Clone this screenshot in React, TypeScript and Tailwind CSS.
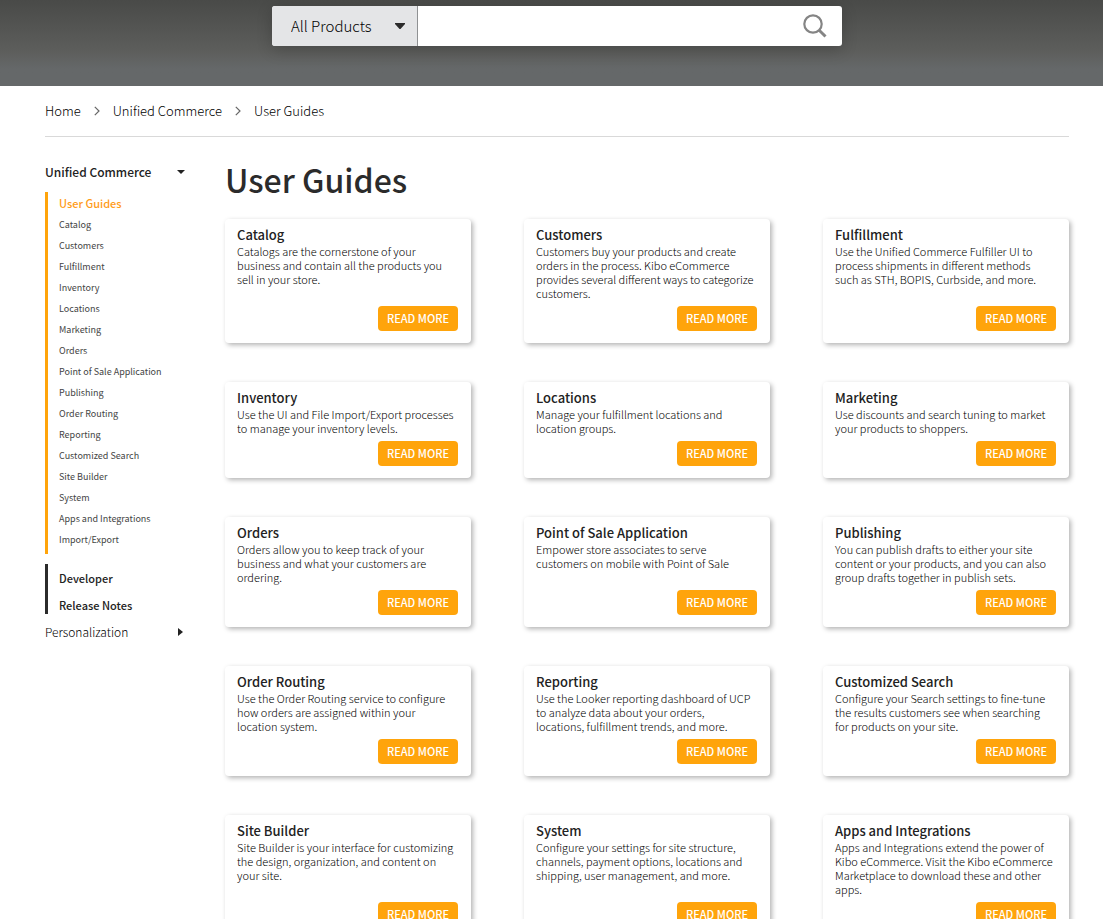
import { useState } from 'react';

const guides = [
  { title: 'Catalog', text: 'Catalogs are the cornerstone of your business and contain all the products you sell in your store.' },
  { title: 'Customers', text: 'Customers buy your products and create orders in the process. Kibo eCommerce provides several different ways to categorize customers.' },
  { title: 'Fulfillment', text: 'Use the Unified Commerce Fulfiller UI to process shipments in different methods such as STH, BOPIS, Curbside, and more.' },
  { title: 'Inventory', text: 'Use the UI and File Import/Export processes to manage your inventory levels.' },
  { title: 'Locations', text: 'Manage your fulfillment locations and location groups.' },
  { title: 'Marketing', text: 'Use discounts and search tuning to market your products to shoppers.' },
  { title: 'Orders', text: 'Orders allow you to keep track of your business and what your customers are ordering.' },
  { title: 'Point of Sale Application', text: 'Empower store associates to serve customers on mobile with Point of Sale' },
  { title: 'Publishing', text: 'You can publish drafts to either your site content or your products, and you can also group drafts together in publish sets.' },
  { title: 'Order Routing', text: 'Use the Order Routing service to configure how orders are assigned within your location system.' },
  { title: 'Reporting', text: 'Use the Looker reporting dashboard of UCP to analyze data about your orders, locations, fulfillment trends, and more.' },
  { title: 'Customized Search', text: 'Configure your Search settings to fine-tune the results customers see when searching for products on your site.' },
  { title: 'Site Builder', text: 'Site Builder is your interface for customizing the design, organization, and content on your site.' },
  { title: 'System', text: 'Configure your settings for site structure, channels, payment options, locations and shipping, user management, and more.' },
  { title: 'Apps and Integrations', text: 'Apps and Integrations extend the power of Kibo eCommerce. Visit the Kibo eCommerce Marketplace to download these and other apps.' },
];

const navItems = [...guides.map(g => g.title), 'Import/Export'];

function SearchBar() {
  const [query, setQuery] = useState('');

  return (
    <form
      role="search"
      onSubmit={e => e.preventDefault()}
      className="mx-auto flex h-10 w-full max-w-[570px] overflow-hidden rounded-[3px] bg-white shadow-[0_4px_16px_rgba(0,0,0,0.2)]"
    >
      <div className="relative w-[146px] shrink-0 border-r border-[#8f9193] bg-[#e4e5e7]">
        <select aria-label="Product" className="h-full w-full appearance-none bg-transparent pl-[19px] text-[15px] font-light text-black">
          <option>All Products</option>
          <option>Unified Commerce</option>
          <option>Personalization</option>
        </select>
        <svg viewBox="0 0 10 6" className="pointer-events-none absolute top-[17px] right-3 h-[6px] w-[10px] fill-[#2b2b2b]">
          <path d="M0 0h10v1L5.5 6h-1L0 1z" />
        </svg>
      </div>
      <input
        type="text"
        aria-label="Search"
        value={query}
        onChange={e => setQuery(e.target.value)}
        className="min-w-0 flex-1 px-4 text-base text-[#222] outline-none"
      />
      <button type="submit" aria-label="Submit search" className="flex w-[54px] items-center justify-center">
        <svg viewBox="0 0 24 24" className="h-6 w-6 fill-none stroke-[#858585] stroke-2">
          <circle cx="10" cy="10" r="8.7" strokeWidth="2.2" />
          <path d="M16.2 16.2L22.5 22.5" strokeWidth="3" />
        </svg>
      </button>
    </form>
  );
}

function Separator() {
  return (
    <svg viewBox="0 0 6 10" className="h-[10px] w-[6px] fill-none stroke-[#666] stroke-[1.2]">
      <path d="M0.8 0.8L5 5L0.8 9.2" />
    </svg>
  );
}

function Breadcrumbs() {
  return (
    <nav aria-label="Breadcrumb" className="flex h-[51px] items-center gap-[13px] border-b border-[#d9d9d9] text-[13px] font-light text-black">
      <a href="#home">Home</a>
      <Separator />
      <a href="#unified-commerce">Unified Commerce</a>
      <Separator />
      <a href="#user-guides">User Guides</a>
    </nav>
  );
}

function Sidebar() {
  return (
    <nav aria-label="Documentation" className="w-[140px] shrink-0 text-[#222]">
      <button className="flex h-[18px] w-full items-center justify-between text-xs font-medium">
        Unified Commerce
        <svg viewBox="0 0 8 4" className="h-1 w-2 fill-current">
          <path d="M0 0h8L4 4z" />
        </svg>
      </button>

      <ul className="mt-[11px] border-l-[3px] border-[#ffa40b] pt-px pb-1 pl-[11px] text-[9px] leading-[21px] text-[#444]">
        <li>
          <a href="#user-guides" className="block text-[11px] font-medium text-[#ff9c1a]">User Guides</a>
        </li>
        {navItems.map(item => (
          <li key={item}>
            <a href="#guide" className="block">{item}</a>
          </li>
        ))}
      </ul>

      <ul className="mt-2.5 flex flex-col gap-[11px] border-l-[3px] border-[#2b2b2b] pt-1.5 pb-px pl-[11px] text-[11px] leading-4 font-medium">
        <li><a href="#developer" className="block">Developer</a></li>
        <li><a href="#release-notes" className="block">Release Notes</a></li>
      </ul>

      <button className="mt-2 flex h-5 w-full items-center justify-between text-xs font-light text-black">
        Personalization
        <svg viewBox="0 0 5 8" className="mr-0.5 h-2 w-[5px] fill-[#222]">
          <path d="M0 0v8l5-4z" />
        </svg>
      </button>
    </nav>
  );
}

export default function App() {
  return (
    <div className="min-h-screen bg-white font-['Noto_Sans_CJK_JP','Noto_Sans_CJK_SC',sans-serif]">
      <header className="bg-linear-to-b from-[#494a48] via-[#5d5e5c] via-60% to-[#656869] to-80% pt-1.5 pr-[34px] pb-10 pl-[45px]">
        <SearchBar />
      </header>

      <div className="pr-[34px] pl-[45px]">
        <Breadcrumbs />

        <div className="flex gap-10 pt-[26px]">
          <Sidebar />

          <main className="min-w-0 flex-1">
            <h1 className="text-[32px] leading-8 font-medium text-[#2b2b2b]">User Guides</h1>

            <div className="mt-6 grid grid-cols-3 gap-x-[53px] gap-y-[39px]">
              {guides.map(guide => (
                <article key={guide.title} className="flex flex-col rounded bg-white pt-[7px] pr-[13px] pb-3 pl-3 shadow-[2px_2px_5px_rgba(0,0,0,0.3)]">
                  <h2 className="text-[13px] leading-[18px] font-medium text-[#222]">{guide.title}</h2>
                  <p className="mr-0.5 mb-1.5 text-[11px] leading-[14px] font-light text-black">{guide.text}</p>
                  <a
                    href="#guide"
                    className="mt-auto block self-end rounded bg-[#ffa40b] px-[9px] pb-px text-[11px] leading-6 font-medium text-white"
                  >
                    READ MORE
                  </a>
                </article>
              ))}
            </div>
          </main>
        </div>
      </div>
    </div>
  );
}
